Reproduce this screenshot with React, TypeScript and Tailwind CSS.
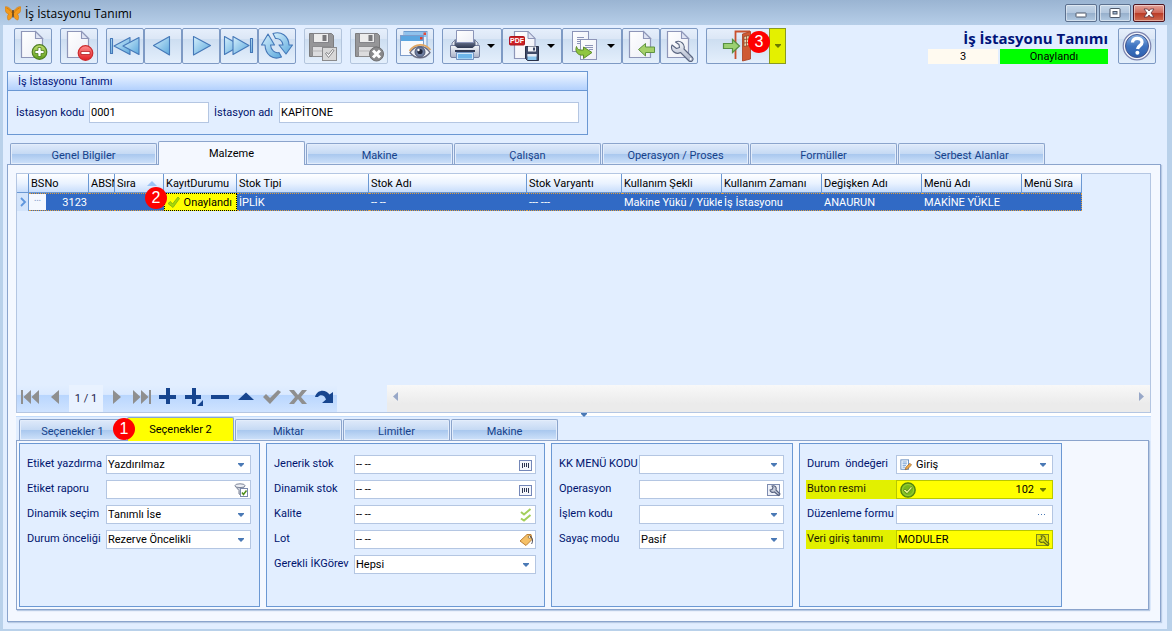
import React, { useState } from "react";
import type { ReactNode } from "react";

/* ---------- shared drawings ---------- */

function Defs() {
  return (
    <svg width="0" height="0" className="absolute" aria-hidden="true">
      <defs>
        <linearGradient id="blue" x1="0" y1="0" x2="1" y2="1">
          <stop offset="0" stopColor="#d6f0fc" />
          <stop offset="1" stopColor="#5aa7dc" />
        </linearGradient>
        <linearGradient id="page" x1="0" y1="0" x2="1" y2="1">
          <stop offset="0" stopColor="#ffffff" />
          <stop offset="1" stopColor="#eceef6" />
        </linearGradient>
        <linearGradient id="green" x1="0" y1="0" x2="0" y2="1">
          <stop offset="0" stopColor="#c3e070" />
          <stop offset="1" stopColor="#5f9f1c" />
        </linearGradient>
        <linearGradient id="red" x1="0" y1="0" x2="0" y2="1">
          <stop offset="0" stopColor="#ff8d8d" />
          <stop offset="1" stopColor="#e11e22" />
        </linearGradient>
        <linearGradient id="steel" x1="0" y1="0" x2="0" y2="1">
          <stop offset="0" stopColor="#f4f6fa" />
          <stop offset="1" stopColor="#a9b2c8" />
        </linearGradient>
        <linearGradient id="dark" x1="0" y1="0" x2="0" y2="1">
          <stop offset="0" stopColor="#7d88a3" />
          <stop offset="1" stopColor="#2c3650" />
        </linearGradient>
        <linearGradient id="help" x1="0" y1="0" x2="0" y2="1">
          <stop offset="0" stopColor="#8fb6e6" />
          <stop offset="0.5" stopColor="#3f74c0" />
          <stop offset="1" stopColor="#2d5fae" />
        </linearGradient>
      </defs>
    </svg>
  );
}

function Icon({ children, size = "size-8" }: { children: ReactNode; size?: string }) {
  return (
    <svg viewBox="0 0 32 32" className={`${size} shrink-0`} aria-hidden="true">
      {children}
    </svg>
  );
}

const sheet = (
  <>
    <path d="M4.500 1.500H18.500l7 7V27.500H4.500Z" fill="url(#page)" stroke="#8e96b8" strokeWidth="1.200" />
    <path d="M18.500 1.500V8.500H25.500Z" fill="#dfe4f3" stroke="#8e96b8" strokeWidth="1.100" />
  </>
);

const NewIcon = () => (
  <Icon>
    {sheet}
    <circle cx="22.500" cy="22" r="7.300" fill="url(#green)" stroke="#4e7d22" strokeWidth="1.200" />
    <path d="M21 17.500h3v3h3v3h-3v3h-3v-3h-3v-3h3Z" fill="#fff" stroke="#4e7d22" strokeWidth="0.800" />
  </Icon>
);
const DeleteIcon = () => (
  <Icon>
    {sheet}
    <circle cx="22.500" cy="23" r="7.300" fill="url(#red)" stroke="#cc2a2c" strokeWidth="1.200" />
    <path d="M18 21.500h9v3h-9Z" fill="#fff" stroke="#b51d1f" strokeWidth="0.800" />
  </Icon>
);
const blueStroke = { fill: "url(#blue)", stroke: "#4578b8", strokeWidth: 1.1, strokeLinejoin: "round" as const };
const FirstIcon = () => (
  <Icon>
    <path d="M1.500 8.500h2v15h-2Z" {...blueStroke} />
    <path d="M21 7.500v17L5 16Z" {...blueStroke} />
    <path d="M30 7.500v17L14 16Z" {...blueStroke} />
  </Icon>
);
const PrevIcon = () => (
  <Icon>
    <path d="M22.500 6.500v18.500L6.500 15.500Z" {...blueStroke} />
  </Icon>
);
const NextIcon = () => (
  <Icon>
    <path d="M8.500 6.500v18.500L25.500 15.500Z" {...blueStroke} />
  </Icon>
);
const LastIcon = () => (
  <Icon>
    <path d="M27.500 8.500h2v14h-2Z" {...blueStroke} />
    <path d="M1.500 6.500v18L17.500 15.500Z" {...blueStroke} />
    <path d="M10 6.500v18L26 15.500Z" {...blueStroke} />
  </Icon>
);
const RefreshIcon = () => (
  <Icon>
    <path d="M12 3.500C20 1 27.500 5.500 28 15H31.500L25 24L18 15H22C21.500 10.500 18 8 14.500 8.500Z" {...blueStroke} />
    <path d="M20.500 27C12 30.500 4.500 25 4 15H0.500L7 4L13.500 15H9.500C10 20.500 14 23.500 18 22.500Z" {...blueStroke} />
  </Icon>
);
const greyDisk = (
  <>
    <path d="M2.500 3.500H24.500L26.500 5.500V26.500H2.500Z" fill="#969698" stroke="#7c7c7e" />
    <rect x="6.500" y="3.500" width="15" height="9" fill="#ececec" stroke="#85858a" />
    <rect x="15.500" y="5" width="4" height="6" fill="#77777a" />
    <rect x="5.500" y="16.500" width="18" height="10" fill="#dcdcde" stroke="#8c8c8e" />
    <path d="M5.500 21h18" stroke="#b7b7b9" />
  </>
);
const SaveIcon = () => (
  <Icon>
    {greyDisk}
    <rect x="15.500" y="17.500" width="14" height="13" fill="#d8d8d8" stroke="#8b8b8d" />
    <path d="M18.500 23.500l3 4 5.500-7-1.500-1-4 5-1.500-2Z" fill="#fff" stroke="#828284" />
  </Icon>
);
const CancelIcon = () => (
  <Icon>
    {greyDisk}
    <circle cx="23.500" cy="24" r="7" fill="#89898b" stroke="#6f6f71" />
    <path d="M20 20.500l7 7m0-7l-7 7" stroke="#fff" strokeWidth="3" />
  </Icon>
);
const ViewIcon = () => (
  <Icon>
    <rect x="5" y="1.500" width="23" height="17" fill="#e6f1fb" stroke="#6c9bcf" />
    <rect x="5.500" y="2" width="22" height="5" fill="#8fc1ec" />
    <rect x="24.500" y="2.500" width="2.500" height="2.500" fill="#e04a3c" />
    <rect x="1.500" y="5.500" width="23" height="20" fill="#f7f9fd" stroke="#7d9ccb" />
    <rect x="2" y="6" width="22" height="5" fill="#5ba6e0" />
    <rect x="21" y="7" width="2.500" height="2.500" fill="#e23b2c" />
    <path d="M11 22.500C16 14.500 26 14.500 31 22.500C26 29.500 16 29.500 11 22.500Z" fill="#eef1f7" stroke="#6b6f85" strokeWidth="1.300" />
    <path d="M10.500 21C16 13 26 13 31.500 20" fill="none" stroke="#e0a763" strokeWidth="1.800" />
    <circle cx="21" cy="22" r="5" fill="#6c7c9f" stroke="#4e5874" />
    <circle cx="21" cy="21.500" r="2.600" fill="#22283c" />
    <circle cx="19.500" cy="20" r="1.200" fill="#fff" />
  </Icon>
);
const PrintIcon = () => (
  <Icon>
    <path d="M3 13L6 10H26L29 13V27H3Z" fill="url(#steel)" stroke="#7781a1" />
    <path d="M1.500 15.500h29V26a1.500 1.500 0 0 1-1.500 1.500H3A1.500 1.500 0 0 1 1.500 26Z" fill="url(#steel)" stroke="#7781a1" />
    <path d="M5.500 9.500h21v6l-3 2.500h-15l-3-2.500Z" fill="url(#dark)" />
    <path d="M7.500 0.500h17v12h-17Z" fill="url(#page)" stroke="#8b95b8" />
    <path d="M6 20h20v2H6Z" fill="#303a55" />
    <path d="M7.500 22.500h17v7h-17Z" fill="#cfe7fa" stroke="#7393c1" />
    <path d="M9 24h14v4.500H9Z" fill="#6db5ea" />
  </Icon>
);
const PdfIcon = () => (
  <Icon>
    <path d="M5.500 1.500H19l7 7V28.500H5.500Z" fill="url(#page)" stroke="#8e96b8" strokeWidth="1.200" />
    <path d="M19 1.500V8.500H26Z" fill="#dfe4f3" stroke="#8e96b8" />
    <rect x="0.500" y="6.500" width="15" height="8.500" rx="1" fill="#cb2027" stroke="#ad161c" />
    <text x="8" y="13.300" textAnchor="middle" fontSize="7" fontWeight="bold" fill="#fff" fontFamily="Liberation Sans, sans-serif">
      PDF
    </text>
    <path d="M16.500 16.500h13v14h-11l-2-2Z" fill="#3e4a68" stroke="#283149" />
    <rect x="19" y="16.500" width="8" height="5" fill="#f2f4f8" />
    <rect x="24" y="17.500" width="2" height="3" fill="#3e4a68" />
    <rect x="18.500" y="24" width="9" height="6" fill="#8ac5ee" />
    <rect x="18.500" y="24" width="9" height="2.500" fill="#e5eaf3" />
  </Icon>
);
const ExportIcon = () => (
  <Icon>
    <rect x="3.500" y="1.500" width="16" height="20" fill="url(#page)" stroke="#8d95b8" />
    <path d="M8 7.500h7M8 9.500h7M8 11.500h7M8 13.500h4" stroke="#8d95b8" />
    <rect x="11.500" y="9.500" width="16" height="20" fill="url(#page)" stroke="#8d95b8" />
    <path d="M16 15.500h8M16 17.500h8M20 19.500h4" stroke="#8d95b8" />
    <path d="M7.500 16.500C8 19.500 10.500 20.500 14.500 20V17L23 22.500L14.500 28.500V25C9 26 5.500 21.500 7.500 16.500Z" fill="#8fc63f" stroke="#5d8c2a" />
  </Icon>
);
const ImportIcon = () => (
  <Icon>
    {sheet}
    <path d="M13.500 19.500l7-6v3.500h9v5.500h-9v3.500Z" fill="#a4d06a" stroke="#5f9340" />
  </Icon>
);
const ToolIcon = () => (
  <Icon>
    {sheet}
    <path
      d="M12.500 12a6 6 0 0 1 8.500 7l8.500 8.500a2.500 2.500 0 0 1-3.500 3.500L17.500 22.500a6 6 0 0 1-8.500-7.500l4.500 3.500 3-1-.5-3Z"
      fill="url(#steel)"
      stroke="#5b6681"
      strokeWidth="1.100"
      strokeLinejoin="round"
    />
    <circle cx="27.600" cy="29" r="0.900" fill="#fff" />
  </Icon>
);
const ExitIcon = () => (
  <Icon>
    <path d="M14.500 29V1.500H29" fill="none" stroke="#c9502d" strokeWidth="1.800" />
    <path d="M21.500 4L29.500 1.500V29L21.500 31Z" fill="#cf5a33" stroke="#a63c1d" strokeWidth="0.800" />
    <path d="M23 6.500l5-1v10l-5 1Z" fill="#e9d9b5" stroke="#8f4526" strokeWidth="0.800" />
    <path d="M25.500 6v10M23 9.500l5-.5M23 13l5-.5" stroke="#8f4526" strokeWidth="0.800" />
    <path d="M2.500 13.500h9v-4l7 6.500-7 6.500v-4h-9Z" fill="#9bd071" stroke="#579142" strokeWidth="1.200" />
  </Icon>
);
const HelpIcon = () => (
  <Icon>
    <circle cx="16" cy="16" r="13.800" fill="#f5f6fb" stroke="#7b83ae" strokeWidth="1.200" />
    <circle cx="16" cy="16" r="11.500" fill="url(#help)" stroke="#44558f" />
    <path d="M11.500 12.500C11.500 7 21 7 21 12.200C21 15.500 17.200 15.500 16.500 19" fill="none" stroke="#fff" strokeWidth="3.300" />
    <circle cx="16.400" cy="22.800" r="2" fill="#fff" />
  </Icon>
);

const Butterfly = () => (
  <svg viewBox="0 0 16 16" className="size-4 shrink-0" aria-hidden="true">
    <path d="M8 7C5 2 1 1 0 2C0 6 1 9 4 9C2 10 2 13 3 15C6 15 7 12 8 9C9 12 10 15 13 15C14 13 14 10 12 9C15 9 16 6 16 2C15 1 11 2 8 7Z" fill="#f39a1c" stroke="#c8740f" strokeWidth="0.500" />
    <path d="M1.500 3C4 4 6 6 7 8M14.500 3C12 4 10 6 9 8" stroke="#a8610f" strokeWidth="0.500" fill="none" />
    <path d="M8 5V12.500" stroke="#3b2a18" strokeWidth="1.200" />
  </svg>
);

function Caret({ className = "text-[#4a79b5]" }: { className?: string }) {
  return (
    <svg viewBox="0 0 6 4" className={`h-1 w-1.5 ${className}`} aria-hidden="true">
      <path d="M0 0h6v1L3 4 0 1Z" fill="currentColor" />
    </svg>
  );
}

function Badge({ n, className }: { n: number; className: string }) {
  return (
    <span
      className={`absolute z-20 flex size-[22px] items-center justify-center rounded-full bg-[#fe0000] font-['Liberation_Sans',Arial,sans-serif] text-base leading-none text-white ${className}`}
    >
      {n}
    </span>
  );
}

/* ---------- toolbar ---------- */

function ToolButton({
  label,
  children,
  gap = false,
  disabled = false,
  menu = false,
}: {
  label: string;
  children: ReactNode;
  gap?: boolean;
  disabled?: boolean;
  menu?: boolean;
}) {
  return (
    <button
      type="button"
      aria-label={label}
      disabled={disabled}
      className={`flex h-9 shrink-0 items-center rounded-xs border bg-[linear-gradient(#e6effb_0%,#dce7f6_28%,#cddef1_30%,#e4effc_100%)] ${
        disabled ? "border-[#b3c5dd]" : "border-[#7e9ac4]"
      } ${gap ? "ml-2" : ""} ${menu ? "w-[60px] gap-1.5 pl-1.5" : "w-[38px] justify-center"}`}
    >
      {children}
      {menu && (
        <svg viewBox="0 0 8 4" className="h-1 w-2" aria-hidden="true">
          <path d="M0 0h8L4 4Z" fill="#000" />
        </svg>
      )}
    </button>
  );
}

function Toolbar() {
  return (
    <div className="flex items-start pl-[11px] pr-[11px]">
      <ToolButton label="Yeni"><NewIcon /></ToolButton>
      <ToolButton label="Sil" gap><DeleteIcon /></ToolButton>
      <ToolButton label="İlk" gap><FirstIcon /></ToolButton>
      <ToolButton label="Önceki"><PrevIcon /></ToolButton>
      <ToolButton label="Sonraki"><NextIcon /></ToolButton>
      <ToolButton label="Son"><LastIcon /></ToolButton>
      <ToolButton label="Yenile"><RefreshIcon /></ToolButton>
      <ToolButton label="Kaydet" gap disabled><SaveIcon /></ToolButton>
      <ToolButton label="Vazgeç" gap disabled><CancelIcon /></ToolButton>
      <ToolButton label="İzle" gap><ViewIcon /></ToolButton>
      <ToolButton label="Yazdır" gap menu><PrintIcon /></ToolButton>
      <ToolButton label="PDF kaydet" menu><PdfIcon /></ToolButton>
      <ToolButton label="Aktar" menu><ExportIcon /></ToolButton>
      <ToolButton label="İçeri al"><ImportIcon /></ToolButton>
      <ToolButton label="Ayarlar"><ToolIcon /></ToolButton>
      <div className="relative ml-2 flex h-9 w-20 shrink-0">
        <button
          type="button"
          aria-label="Çıkış"
          className="flex flex-1 items-center rounded-l-xs border border-r-0 border-[#7e9ac4] bg-[linear-gradient(#e6effb_0%,#dce7f6_28%,#cddef1_30%,#e4effc_100%)] pl-3.5"
        >
          <ExitIcon />
        </button>
        <button
          type="button"
          aria-label="Çıkış seçenekleri"
          className="flex w-[17px] items-center justify-center border border-[#8a9a20] bg-[#e4f000]"
        >
          <Caret className="text-[#6b7a00]" />
        </button>
        <Badge n={3} className="left-[42px] top-[3px]" />
      </div>
      <div className="ml-auto flex flex-col items-end">
        <h1 className="font-['Open_Sans',sans-serif] text-[15px] font-bold leading-[21px] text-[#00147a]">İş İstasyonu Tanımı</h1>
        <div className="flex gap-0.5 text-center leading-[15px] text-black">
          <span className="w-[70px] bg-[#fffaf0]">3</span>
          <span className="w-[108px] bg-[#00ff00]">Onaylandı</span>
        </div>
      </div>
      <div className="ml-2.5">
        <ToolButton label="Yardım"><HelpIcon /></ToolButton>
      </div>
    </div>
  );
}

/* ---------- tabs ---------- */

function Tabs({
  items,
  active,
  onSelect,
  width,
  marked = false,
}: {
  items: string[];
  active: number;
  onSelect: (i: number) => void;
  width: string;
  marked?: boolean;
}) {
  return (
    <div role="tablist" className="flex items-end gap-px pl-[3px]">
      {items.map((t, i) => {
        const on = i === active;
        return (
          <button
            key={t}
            type="button"
            role="tab"
            aria-selected={on}
            onClick={() => onSelect(i)}
            className={`relative ${width} rounded-t-xs border border-b-0 border-[#8ba4cc] ${
              on
                ? `z-10 -mb-px h-6 text-black ${marked ? "bg-[#ffff00]" : "bg-[#f4f8ff]"}`
                : "h-[21px] bg-[linear-gradient(#dfeafa_0%,#c6daf4_48%,#a8c7ee_50%,#cfe2fa_100%)] pt-0.5 text-[#15428b] shadow-[inset_0_0_0_1px_#e3edfb]"
            }`}
          >
            {t}
            {marked && i === 1 && <Badge n={1} className="-left-[15px] top-0" />}
          </button>
        );
      })}
    </div>
  );
}

/* ---------- grid ---------- */

const columns = [
  { title: "BSNo", width: "w-[60px]" },
  { title: "ABSNo", width: "w-[26px]" },
  { title: "Sıra", width: "w-[49px]", sorted: true },
  { title: "KayıtDurumu", width: "w-[73px]" },
  { title: "Stok Tipi", width: "w-[132px]" },
  { title: "Stok Adı", width: "w-[158px]" },
  { title: "Stok Varyantı", width: "w-[95px]" },
  { title: "Kullanım Şekli", width: "w-[100px]" },
  { title: "Kullanım Zamanı", width: "w-[100px]" },
  { title: "Değişken Adı", width: "w-[100px]" },
  { title: "Menü Adı", width: "w-[100px]" },
  { title: "Menü Sıra", width: "w-[60px]" },
];

const CheckMark = () => (
  <svg viewBox="0 0 14 14" className="size-3.5 shrink-0" aria-hidden="true">
    <path d="M1 8.500l2.500-2 2 2.500 5.500-7 1.500 1.500L6 12.500Z" fill="#a6d80a" stroke="#7fb010" strokeWidth="0.800" />
  </svg>
);

function DataTable() {
  const cell = "overflow-hidden whitespace-nowrap border-y border-dotted border-[#e0a040] px-0.5 pb-0 pt-px";
  return (
    <table className="w-[1065px] table-fixed border-separate border-spacing-0 text-left">
      <thead>
        <tr className="h-[19px] bg-[linear-gradient(#ffffff_0%,#e9f2ff_50%,#c4dbfb_100%)] text-black">
          <th className="w-3 border-b border-r border-[#6b98d3]" aria-label="İşaret" />
          {columns.map((c) => (
            <th key={c.title} className={`${c.width} overflow-hidden whitespace-nowrap border-b border-r border-[#6b98d3] p-0 pl-0.5 pt-px font-normal`}>
              <span className={`flex items-center justify-between overflow-hidden ${c.sorted ? "pr-1.5" : ""}`}>
                {c.title}
                {c.sorted && (
                  <svg viewBox="0 0 10 5" className="h-[5px] w-2.5 shrink-0" aria-hidden="true">
                    <path d="M0 5L5 0L10 5Z" fill="#9cc4f5" />
                  </svg>
                )}
              </span>
            </th>
          ))}
        </tr>
      </thead>
      <tbody>
        <tr className="h-[18px] bg-[#316ac5] text-white">
          <td className="border-r border-[#6b98d3] bg-[#d3e4fb] p-0">
            <svg viewBox="0 0 11 12" className="h-3 w-[11px]" aria-hidden="true">
              <path d="M4 2l4 4-4 4" fill="none" stroke="#5e96dd" strokeWidth="1.800" />
            </svg>
          </td>
          <td className="border-y border-dotted border-[#e0a040] p-0 pr-0.5">
            <span className="flex h-4 items-center justify-between">
              <span className="h-full w-[17px] bg-[#f4f8ff] text-center leading-[8px] text-[#8ba4cc]">…</span>
              3123
            </span>
          </td>
          <td className={cell} />
          <td className={cell} />
          <td className="relative border border-dotted border-black bg-[#ffff00] p-0 text-black">
            <span className="flex h-4 items-center justify-between pl-0.5 pr-1">
              <CheckMark />
              Onaylandı
            </span>
            <Badge n={2} className="-left-5 -top-[7px]" />
          </td>
          <td className={cell}>İPLİK</td>
          <td className={cell}>-- --</td>
          <td className={cell}>--- ---</td>
          <td className={cell}>Makine Yükü / Yükler</td>
          <td className={cell}>İş İstasyonu</td>
          <td className={cell}>ANAURUN</td>
          <td className={cell}>MAKİNE YÜKLE</td>
          <td className="border border-l-0 border-dotted border-[#e0a040]" />
        </tr>
      </tbody>
    </table>
  );
}

const navGrey = "#8f8f8f";
const navBlue = "#17458f";
const navLeft: [string, ReactNode][] = [
  ["İlk kayıt", <path key="a" d="M1 3h2v14H1ZM11 3v14L3.500 10ZM19 3v14L11.500 10Z" fill={navGrey} />],
  ["Önceki kayıt", <path key="b" d="M13 3v14L5 10Z" fill={navGrey} />],
];
const navRight: [string, ReactNode][] = [
  ["Sonraki kayıt", <path key="c" d="M7 3v14L15 10Z" fill={navGrey} />],
  ["Son kayıt", <path key="d" d="M17 3h2v14h-2ZM1 3v14L8.500 10ZM9 3v14L16.500 10Z" fill={navGrey} />],
  ["Ekle", <path key="e" d="M8 1h4v7h6v4h-6V17H8v-5H1V8h7Z" fill={navBlue} />],
  ["Alt kayıt ekle", <path key="f" d="M8 1h4v7h5v4h-5V17H8v-5H1V8h7ZM19 13v6h-6Z" fill={navBlue} />],
  ["Kayıt sil", <path key="g" d="M1 8h18v4H1Z" fill={navBlue} />],
  ["Düzenle", <path key="h" d="M2 13L10 5.500L18 13Z" fill={navBlue} />],
  ["Onayla", <path key="i" d="M1 10l3-3 4 4 8-8 3 2L8 17Z" fill={navGrey} />],
  ["İptal", <path key="j" d="M1 3h5l4 5 4-5h5l-6 7 6 7h-5l-4-5-4 5H1l6-7Z" fill={navGrey} />],
  ["Tazele", <path key="k" d="M1 10C3 2 12 2 15.500 7.500L19 5v11H8l4-3.500C11 8 6 7 4 10Z" fill={navBlue} />],
];

function NavButton({ label, children }: { label: string; children: ReactNode }) {
  return (
    <button type="button" aria-label={label} className="flex h-full w-[26px] items-center justify-center pb-1">
      <svg viewBox="0 0 20 20" className="size-5" aria-hidden="true">
        {children}
      </svg>
    </button>
  );
}

function Navigator() {
  return (
    <div className="flex h-[27px] shrink-0">
      <div className="flex shrink-0 bg-[linear-gradient(#e2eeff_0%,#dae9ff_35%,#b9d6fe_38%,#cfe3ff_100%)]">
        {navLeft.map(([l, d]) => (
          <NavButton key={l} label={l}>{d}</NavButton>
        ))}
        <span className="flex w-[34px] items-center justify-center bg-[#e9f2ff] text-[#1a1a4a]">1 / 1</span>
        {navRight.map(([l, d]) => (
          <NavButton key={l} label={l}>{d}</NavButton>
        ))}
      </div>
      <div className="ml-[50px] flex flex-1 items-center justify-between bg-[linear-gradient(#f8f8f8,#ebebeb_70%)] px-1.5 pb-1">
        <svg viewBox="0 0 5 9" className="h-[9px] w-[5px]" aria-hidden="true">
          <path d="M5 0v9L0 4.500Z" fill="#98a8c8" />
        </svg>
        <svg viewBox="0 0 5 9" className="h-[9px] w-[5px]" aria-hidden="true">
          <path d="M0 0v9l5-4.500Z" fill="#98a8c8" />
        </svg>
      </div>
    </div>
  );
}

/* ---------- detail fields ---------- */

const FilterIcon = () => (
  <svg viewBox="0 0 14 14" className="size-3.5" aria-hidden="true">
    <path d="M1 3l4 4.500V11l2 1V7.500L11 3Z" fill="#c9ced9" stroke="#7a8296" />
    <ellipse cx="6" cy="2.700" rx="5" ry="1.900" fill="#eef0f5" stroke="#7a8296" />
    <rect x="6.500" y="5.500" width="7" height="8" fill="#fff" stroke="#7b89ab" />
    <path d="M8 9.500l1.500 2 3-4" fill="none" stroke="#4f8f1c" strokeWidth="1.500" />
  </svg>
);
const BarcodeIcon = () => (
  <svg viewBox="0 0 14 14" className="size-3.5" shapeRendering="crispEdges" aria-hidden="true">
    <rect x="0.500" y="2.500" width="12" height="10" fill="#f4f6fb" stroke="#7487b8" />
    <path d="M3 5h1v5H3ZM5 5h1v4H5ZM7 5h1v4H7ZM9 5h1v5H9Z" fill="#2c3550" />
  </svg>
);
const DoubleCheckIcon = () => (
  <svg viewBox="0 0 14 14" className="size-3.5" aria-hidden="true">
    <path d="M2 4l3 2.500L11.500 1M2 10.500l3 2L11.500 7" fill="none" stroke="#a3cf5a" strokeWidth="2" />
  </svg>
);
const TagIcon = () => (
  <svg viewBox="0 0 14 14" className="size-3.5" aria-hidden="true">
    <path d="M1 8L8 1.500h4l1 5L7 12.500Z" fill="#f5c067" stroke="#b4762a" strokeWidth="0.900" />
    <circle cx="10.500" cy="4" r="1.300" fill="#fff" stroke="#7a5a2a" strokeWidth="0.700" />
    <path d="M11 3c3 2 3 6 1.500 8" fill="none" stroke="#4c4c58" />
  </svg>
);
const LookupIcon = ({ marked = false }: { marked?: boolean }) => (
  <svg viewBox="0 0 14 14" className="size-3.5" aria-hidden="true">
    <rect x="0.500" y="1.500" width="12" height="11" fill={marked ? "#e6e600" : "#eef1f8"} stroke={marked ? "#7d8a1e" : "#7d8cb0"} />
    <path
      d="M3 7l2-.5 1-2-1-1.500c3-1 5 1.500 4 4l4 4-1.500 1.500L7.500 9C5.500 10 3 9 3 7Z"
      fill={marked ? "#d9dc1a" : "#c5cbd9"}
      stroke={marked ? "#5f6c12" : "#56617f"}
      strokeWidth="1.100"
    />
  </svg>
);
const NoteIcon = () => (
  <svg viewBox="0 0 14 14" className="size-3 shrink-0" aria-hidden="true">
    <rect x="1" y="1" width="9" height="11" fill="#f3f7fd" stroke="#5c86bd" />
    <path d="M3 3.500h5M3 5.500h5M3 7.500h4M3 9.500h3" stroke="#6d9bd2" />
    <path d="M6 12.500l1-3L11.500 5l2 2L9 11.500Z" fill="#f0a94a" stroke="#94602a" strokeWidth="0.800" />
  </svg>
);
const OkIcon = () => (
  <svg viewBox="0 0 16 16" className="size-4 shrink-0" aria-hidden="true">
    <circle cx="8" cy="8" r="7.200" fill="#78b81c" stroke="#4f7f10" strokeWidth="1.300" />
    <circle cx="8" cy="8" r="5.500" fill="none" stroke="#a5d33a" strokeWidth="0.800" />
    <path d="M3.500 8.500l1.500-1.500 2 2 4-4.500 1.500 1.300L7 11.800Z" fill="#e4f28a" stroke="#4a7a10" strokeWidth="0.700" />
  </svg>
);

type FieldDef = {
  label: string;
  value?: string;
  kind?: "select" | "text";
  lead?: ReactNode;
  action?: ReactNode;
  marked?: boolean;
  right?: boolean;
};

function Field({ label, value = "", kind = "text", lead, action, marked = false, right = false }: FieldDef) {
  const id = "f-" + label.replace(/\s+/g, "-");
  return (
    <>
      <label
        htmlFor={id}
        className={`h-[19px] whitespace-pre leading-[18px] ${marked ? "-ml-px bg-[#e2f000] pl-px text-[#1c1c00]" : "text-[#00146e]"}`}
      >
        {label}
      </label>
      <div
        className={`relative flex h-[19px] min-w-0 items-center border ${
          marked ? "border-[#b9c800] bg-[#ffff00]" : "border-[#b4c6e2] bg-white"
        }`}
      >
        {lead && <span className="pl-[3px]">{lead}</span>}
        {kind === "select" ? (
          <>
            <select
              id={id}
              defaultValue={value}
              className={`h-full min-w-0 flex-1 appearance-none bg-transparent leading-[17px] text-black outline-none ${lead ? "pl-1" : "pl-px"} ${
                right ? "pr-[18px] text-right" : "pr-4"
              }`}
            >
              <option value={value}>{value}</option>
            </select>
            <span className="pointer-events-none absolute right-1.5">
              <Caret className={marked ? "text-[#6b7a00]" : "text-[#4a79b5]"} />
            </span>
          </>
        ) : (
          <>
            <input id={id} type="text" defaultValue={value} className="h-full min-w-0 flex-1 bg-transparent pl-px text-black outline-none" />
            {action && (
              <button type="button" aria-label={label + " seç"} className="mr-0.5 flex shrink-0 items-center justify-center">
                {action}
              </button>
            )}
          </>
        )}
      </div>
    </>
  );
}

function FieldBox({ grid, fields }: { grid: string; fields: FieldDef[] }) {
  return (
    <div className={`grid h-[164px] shrink-0 content-start gap-y-1.5 border border-[#6b98d3] bg-[#e2eeff] pl-[7px] pr-2 pt-[11px] ${grid}`}>
      {fields.map((f) => (
        <Field key={f.label} {...f} />
      ))}
    </div>
  );
}

const DotsIcon = () => (
  <svg viewBox="0 0 14 14" className="size-3.5" shapeRendering="crispEdges" aria-hidden="true">
    <path d="M2 6h1v1H2ZM5 6h1v1H5ZM8 6h1v1H8Z" fill="#4a79b5" />
  </svg>
);

const box1: FieldDef[] = [
  { label: "Etiket yazdırma", value: "Yazdırılmaz", kind: "select" },
  { label: "Etiket raporu", action: <FilterIcon /> },
  { label: "Dinamik seçim", value: "Tanımlı İse", kind: "select" },
  { label: "Durum önceliği", value: "Rezerve Öncelikli", kind: "select" },
];
const box2: FieldDef[] = [
  { label: "Jenerik stok", value: "-- --", action: <BarcodeIcon /> },
  { label: "Dinamik stok", value: "-- --", action: <BarcodeIcon /> },
  { label: "Kalite", value: "-- --", action: <DoubleCheckIcon /> },
  { label: "Lot", value: "-- --", action: <TagIcon /> },
  { label: "Gerekli İKGörev", value: "Hepsi", kind: "select" },
];
const box3: FieldDef[] = [
  { label: "KK MENÜ KODU", kind: "select" },
  { label: "Operasyon", action: <LookupIcon /> },
  { label: "İşlem kodu", kind: "select" },
  { label: "Sayaç modu", value: "Pasif", kind: "select" },
];
const box4: FieldDef[] = [
  { label: "Durum  öndeğeri", value: "Giriş", kind: "select", lead: <NoteIcon /> },
  { label: "Buton resmi", value: "102", kind: "select", lead: <OkIcon />, marked: true, right: true },
  { label: "Düzenleme formu", action: <DotsIcon /> },
  { label: "Veri giriş tanımı", value: "MODULER", action: <LookupIcon marked />, marked: true },
];

/* ---------- window ---------- */

function WindowButton({ label, close = false, children }: { label: string; close?: boolean; children: ReactNode }) {
  return (
    <button
      type="button"
      aria-label={label}
      className={`flex h-[18px] w-8 items-center justify-center rounded-xs border shadow-[inset_0_0_0_1px_rgba(255,255,255,0.45)] ${
        close
          ? "border-[#4d1420] bg-[linear-gradient(#e3a39a_0%,#d0695a_48%,#b93a26_50%,#cf6a50_100%)]"
          : "border-[#5c718f] bg-[linear-gradient(#c5d6e8_0%,#b3c7de_48%,#95aecb_50%,#b3cae2_100%)]"
      }`}
    >
      <svg viewBox="0 0 14 10" className="h-2.5 w-3.5" aria-hidden="true">
        {children}
      </svg>
    </button>
  );
}

export default function App() {
  const [tab, setTab] = useState(1);
  const [sub, setSub] = useState(1);
  return (
    <div className="flex min-h-screen flex-col bg-[#b9d1ea] font-[Roboto,'Liberation_Sans',sans-serif] text-[11px] leading-[15px]">
      <Defs />
      <header className="flex h-[25px] shrink-0 items-center gap-1 bg-[linear-gradient(#9ab4d2,#b6cee8)] pl-[5px] pr-[7px]">
        <Butterfly />
        <span className="pt-0.5 font-['Open_Sans',sans-serif] text-xs text-black">İş İstasyonu Tanımı</span>
        <div className="ml-auto flex gap-0.5">
          <WindowButton label="Simge durumuna küçült">
            <rect x="2" y="5" width="10" height="4" rx="0.500" fill="#fff" stroke="#4c5768" />
          </WindowButton>
          <WindowButton label="Ekranı kapla">
            <rect x="2" y="0.500" width="10" height="9" rx="0.500" fill="#fff" stroke="#4c5768" />
            <rect x="5" y="3.500" width="4" height="2.500" fill="#9fb8d4" stroke="#4c5768" />
          </WindowButton>
          <WindowButton label="Kapat" close>
            <path d="M2 1h3.500L7 3l1.500-2H12L9 5l3 4H8.500L7 7 5.500 9H2l3-4Z" fill="#fff" stroke="#5a3038" strokeWidth="0.800" />
          </WindowButton>
        </div>
      </header>

      <main className="mb-0.5 ml-[3px] mr-[5px] flex flex-1 flex-col bg-[#e2eeff] pt-[3px]">
        <Toolbar />

        <section className="ml-1 mt-[7px] flex h-16 w-[581px] flex-col border border-[#6b98d3]">
          <h2 className="h-[19px] border-b border-[#6b98d3] bg-[linear-gradient(#f0f7ff_0%,#d5e6ff_45%,#b3d1fd_100%)] pl-2.5 leading-[19px] text-[#00147a]">
            İş İstasyonu Tanımı
          </h2>
          <div className="flex items-center pl-2 pr-2 pt-[11px] text-[#00146e]">
            <label htmlFor="kod" className="w-[73px]">İstasyon kodu</label>
            <input id="kod" type="text" defaultValue="0001" className="h-[21px] w-[120px] border border-[#b4c6e2] bg-white pl-px text-black outline-none" />
            <label htmlFor="ad" className="w-[70px] pl-[5px]">İstasyon adı</label>
            <input id="ad" type="text" defaultValue="KAPİTONE" className="h-[21px] min-w-0 flex-1 border border-[#b4c6e2] bg-white pl-px text-black outline-none" />
          </div>
        </section>

        <div className="mb-[7px] ml-1 mr-1.5 mt-1.5 flex flex-1 flex-col">
          <Tabs
            items={["Genel Bilgiler", "Malzeme", "Makine", "Çalışan", "Operasyon / Proses", "Formüller", "Serbest Alanlar"]}
            active={tab}
            onSelect={setTab}
            width="w-[147px]"
          />
          <div className="flex flex-1 flex-col border border-[#8ba4cc] bg-[#f4f8ff] pb-[11px] pl-2 pr-[9px] pt-2 shadow-[1px_1px_1px_#b9cbe4]">
            <div className="flex flex-1 flex-col border border-[#b4c6e2] bg-[#e2eeff]">
              <DataTable />
              <div className="flex-1" />
              <Navigator />
            </div>
            <div className="flex h-1 justify-center border-b border-[#c3dcfb] bg-white">
              <Caret />
            </div>
            <div className="bg-[#e2eeff]">
              <Tabs
                items={["Seçenekler 1", "Seçenekler 2", "Miktar", "Limitler", "Makine"]}
                active={sub}
                onSelect={setSub}
                width="w-[107px]"
                marked
              />
              <div className="mr-0.5 flex gap-1.5 border border-[#8ba4cc] bg-[#f4f8ff] p-0.5 shadow-[1px_1px_1px_#b9cbe4]">
                <FieldBox grid="w-[241px] grid-cols-[79px_1fr]" fields={box1} />
                <FieldBox grid="w-[279px] grid-cols-[80px_1fr]" fields={box2} />
                <FieldBox grid="w-[242px] grid-cols-[80px_1fr]" fields={box3} />
                <FieldBox grid="w-[263px] grid-cols-[89px_1fr]" fields={box4} />
              </div>
            </div>
          </div>
        </div>
      </main>
    </div>
  );
}
